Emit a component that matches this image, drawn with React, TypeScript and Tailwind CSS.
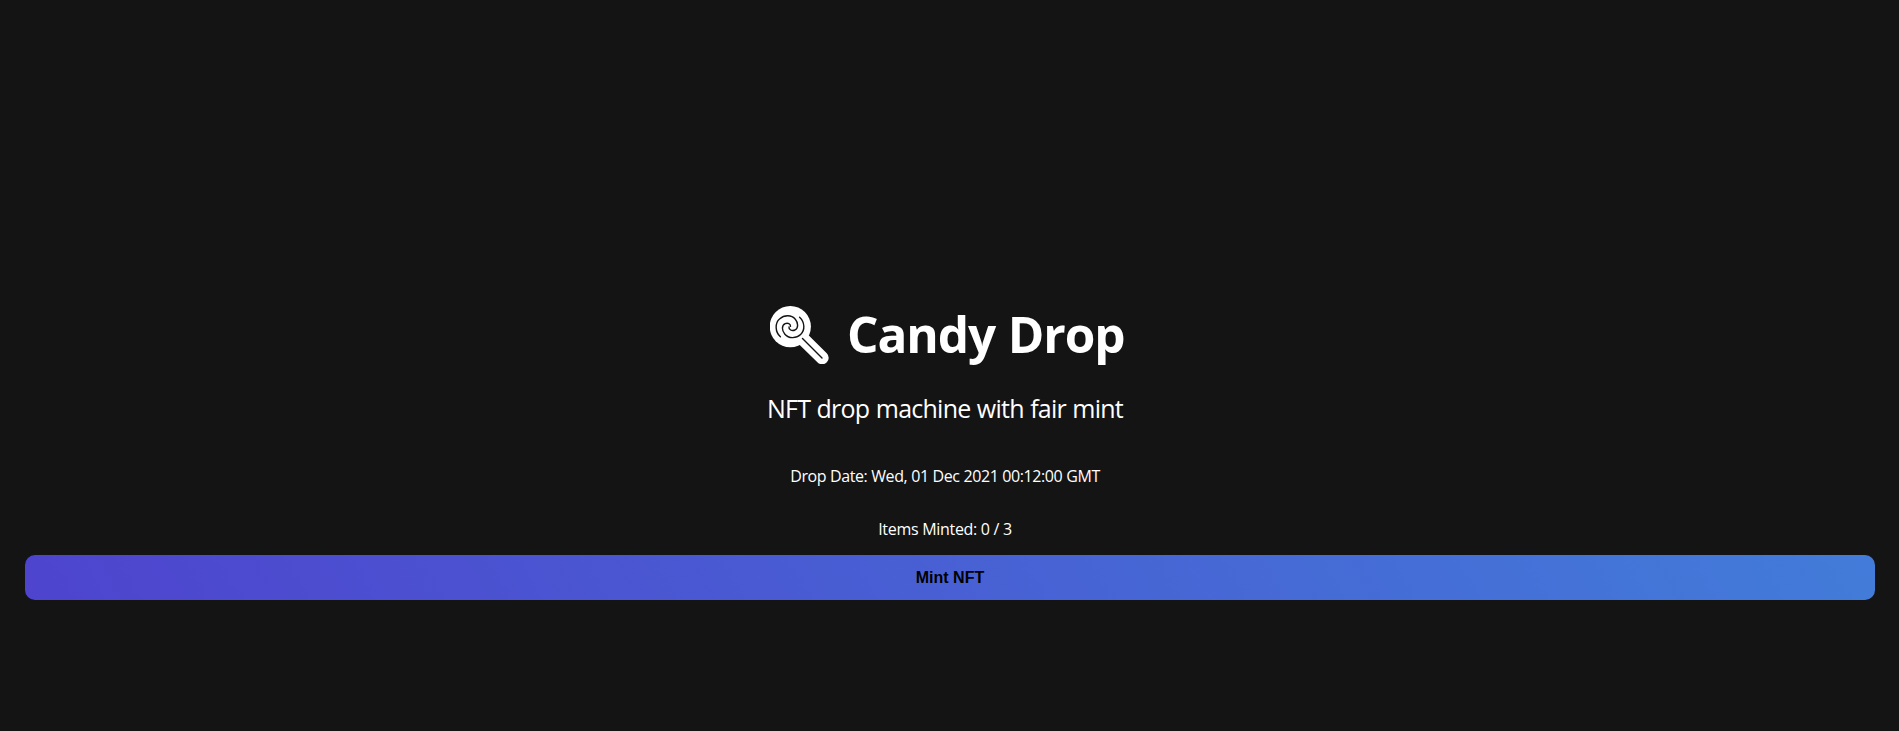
function Lollipop() {
  return (
    <svg className="h-[60px] w-[60px] shrink-0" viewBox="0 0 60 60" fill="none" strokeLinecap="round">
      <path d="M33 35L52.2 53.8" stroke="#fff" strokeWidth="13" />
      <circle cx="20.3" cy="22.6" r="20.6" fill="#fff" />
      <path d="M32.5 34.6L52 54" stroke="#141414" strokeWidth="1.4" />
      <g stroke="#141414" strokeWidth="1.4">
        <path d="M10.4 32.8C5 28 4.8 19 9.5 15C14.5 10.5 21.5 10.8 25.3 15.2C28.4 18.8 28.5 24.2 25 26C21.8 27.5 18.6 25.5 19 23" />
        <path d="M29.6 13.2C34.8 18 35.3 26.2 30.6 30.5C26 34.8 18.6 34.6 14.9 30.2C11.6 26.3 11.5 21.4 15.2 19.7C17.8 18.6 20.7 19.8 20.5 22.4" />
      </g>
    </svg>
  );
}

export default function App() {
  return (
    <main className="flex h-screen flex-col overflow-hidden bg-[#141414] pt-[304px] font-['Open_Sans','Noto_Sans',sans-serif] text-white">
      <header className="flex flex-col">
        <h1 className="flex h-[60px] items-center pl-[770px] text-[49.5px] leading-[60px] font-bold whitespace-nowrap">
          <Lollipop />
          <span className="ml-[17px] tracking-[-1.1px] [word-spacing:1px]">Candy Drop</span>
        </h1>
        <p className="mt-[27px] pr-[9px] text-center text-[25px] leading-[34px] tracking-[-0.75px] [word-spacing:0.6px]">
          NFT drop machine with fair mint
        </p>
      </header>
      <section className="mt-[41px] flex flex-col text-[16px] leading-5">
        <p className="pr-[9px] text-center tracking-[-0.42px] [word-spacing:0.2px]">Drop Date: Wed, 01 Dec 2021 00:12:00 GMT</p>
        <p className="mt-[33px] pr-[9px] text-center tracking-[-0.3px]">Items Minted: 0 / 3</p>
        <button className="mt-4 mr-6 ml-[25px] h-[45px] rounded-[10px] bg-linear-[60deg,#4e44ce,#427cd9] font-['Liberation_Sans',Arial,sans-serif] text-[16px] font-bold text-black">
          Mint NFT
        </button>
      </section>
    </main>
  );
}
